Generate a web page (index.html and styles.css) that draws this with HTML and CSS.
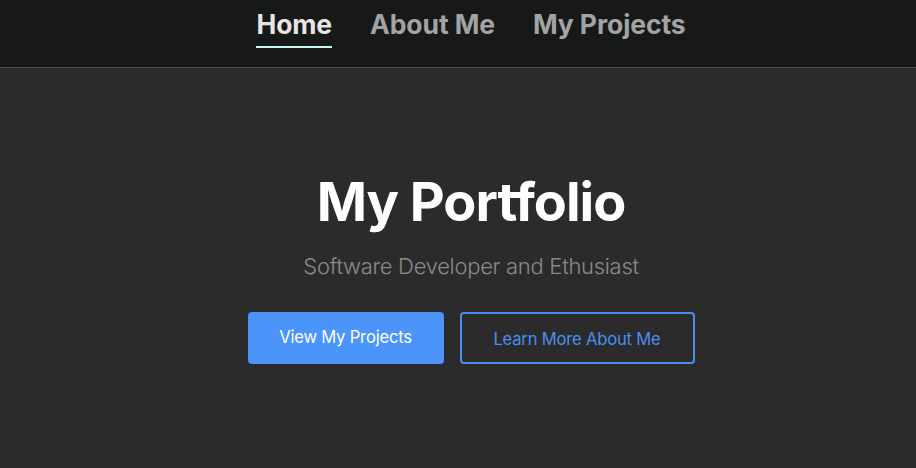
FILE: index.html
```html
<!DOCTYPE html>
<html lang="en">
<head>
<meta charset="utf-8">
<title>My Portfolio</title>
<link rel="stylesheet" href="styles.css">
</head>
<body>
<header class="nav">
  <a class="nav-link active" href="#">Home</a>
  <a class="nav-link" href="#">About Me</a>
  <a class="nav-link" href="#">My Projects</a>
</header>
<main class="hero">
  <h1 class="title">My Portfolio</h1>
  <p class="subtitle">Software Developer and Ethusiast</p>
  <div class="actions">
    <a class="btn btn-primary" href="#">View My Projects</a>
    <a class="btn btn-outline" href="#">Learn More About Me</a>
  </div>
</main>
</body>
</html>
```
FILE: styles.css
```css
* { box-sizing: border-box; }
html, body { margin: 0; height: 100%; }
body {
  background: #2b2b2b;
  font-family: Inter, "Noto Sans", sans-serif;
  color: #fff;
}
.nav {
  height: 68px;
  background: #171919;
  border-bottom: 1px solid #4a4a4a;
  display: flex;
  justify-content: center;
  align-items: flex-start;
  gap: 38px;
  padding-top: 8px;
  padding-left: 26px;
}
.nav-link {
  font-size: 26.5px;
  font-weight: 700;
  color: #a3a3a3;
  text-decoration: none;
  letter-spacing: -0.1px;
  padding-bottom: 6px;
  border-bottom: 2px solid transparent;
  line-height: 32px;
}
.nav-link.active {
  color: #e6e6e6;
  border-bottom-color: #c8f3f3;
}
.hero {
  display: flex;
  flex-direction: column;
  align-items: center;
  padding-top: 102px;
  padding-left: 26px;
}
.title {
  margin: 0;
  font-size: 54px;
  font-weight: 700;
  letter-spacing: -1px;
  line-height: 64px;
}
.subtitle {
  margin: 18px 0 0;
  font-size: 22px;
  font-weight: 300;
  color: #8a8a8a;
  line-height: 28px;
  letter-spacing: -0.3px;
}
.actions {
  display: flex;
  gap: 16px;
  margin-top: 32px;
}
.btn {
  height: 52px;
  display: flex;
  align-items: center;
  justify-content: center;
  border-radius: 4px;
  font-size: 16.6px;
  text-decoration: none;
  letter-spacing: -0.2px;
}
.btn-primary {
  width: 196px;
  background: #4a94fa;
  color: #fff;
  padding-bottom: 3px;
}
.btn-outline {
  width: 235px;
  border: 2px solid #4a8ef0;
  color: #4a8ef0;
  padding-top: 2px;
}
```
